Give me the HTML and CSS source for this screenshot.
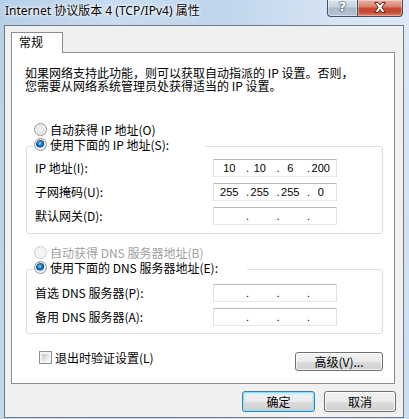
FILE: index.html
```html
<!DOCTYPE html>
<html lang="zh-CN">
<head>
<meta charset="utf-8">
<title>Internet 协议版本 4 (TCP/IPv4) 属性</title>
<link rel="stylesheet" href="styles.css">
</head>
<body>
<div class="titlebar">
  <div class="title">Internet 协议版本 4 (TCP/IPv4) 属性</div>
  <div class="caption">
    <div class="cbtn help"><span class="qmark">?</span></div>
    <div class="cbtn close">
      <svg width="14" height="11" viewBox="0 0 14 11"><path d="M1.5 0.5 H5 L7 3 L9 0.5 H12.5 L8.8 5.3 L12.5 10.5 H9 L7 7.6 L5 10.5 H1.5 L5.2 5.3 Z" fill="#fff" stroke="#6b2216" stroke-width="1" stroke-linejoin="round"/></svg>
    </div>
  </div>
</div>
<div class="client">
  <div class="tabs"><div class="tab">常规</div></div>
  <div class="panel">
    <p class="desc">如果网络支持此功能，则可以获取自动指派的 IP 设置。否则，<br>您需要从网络系统管理员处获得适当的 IP 设置。</p>

    <div class="radio-row"><span class="radio"></span><span>自动获得 IP 地址(O)</span></div>
    <fieldset class="group group-ip">
      <legend class="legend-ip"><span class="radio-line"><span class="radio checked"></span><span>使用下面的 IP 地址(S):</span></span></legend>
      <div class="grid grid-ip">
        <span class="lbl">IP 地址(I):</span>
        <div class="ipbox"><span class="oct"><span class="num">10</span></span><span class="oct"><span class="dot">.</span><span class="num">10</span></span><span class="oct"><span class="dot">.</span><span class="num">6</span></span><span class="oct"><span class="dot">.</span><span class="num">200</span></span></div>
        <span class="lbl">子网掩码(U):</span>
        <div class="ipbox"><span class="oct"><span class="num">255</span></span><span class="oct"><span class="dot">.</span><span class="num">255</span></span><span class="oct"><span class="dot">.</span><span class="num">255</span></span><span class="oct"><span class="dot">.</span><span class="num">0</span></span></div>
        <span class="lbl">默认网关(D):</span>
        <div class="ipbox"><span class="oct"></span><span class="oct"><span class="dot">.</span></span><span class="oct"><span class="dot">.</span></span><span class="oct"><span class="dot">.</span></span></div>
      </div>
    </fieldset>

    <div class="radio-row radio-row-dns disabled"><span class="radio off"></span><span>自动获得 DNS 服务器地址(B)</span></div>
    <fieldset class="group group-dns">
      <legend class="legend-dns"><span class="radio-line"><span class="radio checked"></span><span>使用下面的 DNS 服务器地址(E):</span></span></legend>
      <div class="grid grid-dns">
        <span class="lbl">首选 DNS 服务器(P):</span>
        <div class="ipbox"><span class="oct"></span><span class="oct"><span class="dot">.</span></span><span class="oct"><span class="dot">.</span></span><span class="oct"><span class="dot">.</span></span></div>
        <span class="lbl">备用 DNS 服务器(A):</span>
        <div class="ipbox"><span class="oct"></span><span class="oct"><span class="dot">.</span></span><span class="oct"><span class="dot">.</span></span><span class="oct"><span class="dot">.</span></span></div>
      </div>
    </fieldset>

    <div class="footer-row">
      <div class="check-line"><span class="checkbox"></span><span>退出时验证设置(L)</span></div>
      <button class="btn btn-adv">高级(V)...</button>
    </div>
  </div>
  <div class="dialog-btns">
    <button class="btn btn-default">确定</button>
    <button class="btn btn-cancel">取消</button>
  </div>
</div>
</body>
</html>
```
FILE: styles.css
```css
* { box-sizing: border-box; }

body {
  margin: 0;
  width: 409px;
  height: 419px;
  overflow: hidden;
  font-family: "Noto Sans CJK SC", sans-serif;
  font-size: 12px;
  color: #000;
  background: linear-gradient(100deg, #b8cfe8 0%, #c9dcf0 25%, #bfd5ec 45%, #d6e4f3 70%, #dce8f5 85%, #c9dcf0 100%);
}

/* ---------- title bar ---------- */
.titlebar {
  height: 25px;
  display: flex;
  justify-content: space-between;
  align-items: flex-start;
}
.title {
  padding: 3px 0 0 5px;
  line-height: 16px;
  font-family: "Noto Sans", "Noto Sans CJK SC", sans-serif;
  font-size: 12px;
  color: #000;
  text-shadow: 0 0 6px #fff, 0 0 3px #fff, 0 0 1px #fff;
}
.caption {
  display: flex;
  margin-right: 6px;
}
.cbtn {
  height: 17px;
  border: 1px solid #45505e;
  border-top: none;
  display: flex;
  justify-content: center;
  align-items: flex-start;
}
.help {
  width: 30px;
  border-right: none;
  border-radius: 0 0 0 4px;
  background: linear-gradient(#dbe4ef 0%, #c4d0df 45%, #a9b8cb 50%, #b4c3d6 100%);
  box-shadow: inset 0 0 0 1px rgba(255,255,255,0.45);
}
.qmark {
  font-family: "DejaVu Sans", sans-serif;
  font-weight: bold;
  font-size: 13px;
  line-height: 14px;
  color: #fff;
  text-shadow: 0 0 1px #3b4a5e, 0 0 1px #3b4a5e, 0 0 2px #3b4a5e;
}
.close {
  width: 46px;
  border-radius: 0 0 4px 0;
  background: linear-gradient(#eab0a3 0%, #dc8370 40%, #c94a33 52%, #c54a33 75%, #d88470 100%);
  box-shadow: inset 0 0 0 1px rgba(255,255,255,0.35);
  padding-top: 2px;
}

/* ---------- client area ---------- */
.client {
  margin-left: 4px;
  width: 400px;
  height: 393px;
  border: 1px solid #6c7a8a;
  background: #f0f0f0;
  display: flex;
  flex-direction: column;
}
.tabs {
  display: flex;
  padding: 6px 0 0 6px;
}
.tab {
  width: 52px;
  height: 21px;
  border: 1px solid #898c95;
  border-bottom: none;
  background: #fff;
  margin-bottom: -1px;
  position: relative;
  z-index: 1;
  padding-left: 7px;
  line-height: 17px;
}
.panel {
  margin-left: 6px;
  width: 384px;
  height: 332px;
  border: 1px solid #898c95;
  background: #fff;
}
.desc {
  margin: 13px 0 0 13px;
  line-height: 13px;
  white-space: nowrap;
}

/* radios */
.radio-row {
  display: flex;
  align-items: center;
  height: 15px;
  margin: 30px 0 0 22px;
}
.radio-row-dns { margin-top: 11px; }
.disabled { color: #a0a0a0; }
.radio-line {
  display: flex;
  align-items: center;
  height: 15px;
}
.radio {
  width: 13px;
  height: 13px;
  border-radius: 50%;
  border: 1px solid #8f959c;
  margin-right: 3px;
  flex: none;
  background: radial-gradient(circle at 50% 45%, #f6f6f6 0, #e6e6e6 45%, #cfd1d4 100%);
  box-shadow: inset 0 0 0 1px #f8f8f8;
}
.radio.checked {
  background:
    radial-gradient(circle at 45% 40%, #9fe4ff 0, #2f93e0 1.6px, #0d4f95 3.4px, #0d3f7a 3.9px, transparent 4.3px),
    radial-gradient(circle at 50% 45%, #f6f6f6 0, #e6e6e6 45%, #cfd1d4 100%);
}
.radio.off {
  border-color: #c8ccd0;
  background: radial-gradient(circle, #f7f7f7 0, #ececec 100%);
}

/* group boxes */
.group {
  margin: 0 11px 0 14px;
  padding: 0 8px 8px 8px;
  border: 1px solid #d5dfe5;
  border-radius: 3px;
  min-width: 0;
}
.group-dns { padding-bottom: 7px; }
.group legend {
  margin-left: -2px;
  padding: 0 0 3px 1px;
  height: 18px;
}
.legend-ip { width: 172px; }
.legend-dns { width: 214px; }

.grid {
  display: grid;
  grid-template-columns: 178px 124px;
  grid-auto-rows: 18px;
  row-gap: 6px;
  align-items: center;
}
.grid-ip { margin-top: 4px; }
.grid-dns { margin-top: 6px; }
.lbl { line-height: 18px; white-space: nowrap; }

.ipbox {
  height: 18px;
  display: flex;
  border: 1px solid;
  border-color: #b5b8bf #dde1e7 #e3e9ef #dde1e7;
  background: #fff;
  font-family: "Liberation Sans", sans-serif;
  font-size: 11px;
  line-height: 16px;
}
.oct {
  flex: 1 1 0;
  display: flex;
  min-width: 0;
}
.dot {
  width: 6px;
  margin-right: -6px;
  text-align: center;
  flex: none;
}
.num {
  flex: 1;
  text-align: center;
}

/* footer row */
.footer-row {
  display: flex;
  align-items: flex-start;
  margin-top: 17px;
}
.check-line {
  display: flex;
  align-items: center;
  height: 13px;
  margin-left: 27px;
}
.checkbox {
  width: 13px;
  height: 13px;
  border: 1px solid #8e8f8f;
  padding: 2px;
  margin-right: 3px;
  background: linear-gradient(135deg, #c3c7cd 0%, #e3e5e8 60%, #f4f4f4 100%) content-box, #f4f4f4;
}

/* buttons */
.btn {
  font-family: "Noto Sans CJK SC", sans-serif;
  font-size: 12px;
  color: #000;
  padding: 0;
  border: 1px solid #707070;
  border-radius: 3px;
  background: linear-gradient(#f2f2f2 0%, #ebebeb 50%, #dddddd 51%, #cfcfcf 100%);
  box-shadow: inset 0 0 0 1px rgba(255,255,255,0.75);
  line-height: 15px;
}
.btn-adv {
  margin: 1px 11px 0 auto;
  width: 88px;
  height: 19px;
}
.dialog-btns {
  display: flex;
  justify-content: flex-end;
  gap: 9px;
  margin-top: 7px;
  padding-right: 7px;
}
.btn-default, .btn-cancel { height: 21px; }
.btn-default {
  width: 73px;
  border-color: #3c7fb1;
  box-shadow: inset 0 0 0 1px #8fe0fb, inset 0 0 2px 2px rgba(170,228,250,0.55);
}
.btn-cancel { width: 72px; }
```
